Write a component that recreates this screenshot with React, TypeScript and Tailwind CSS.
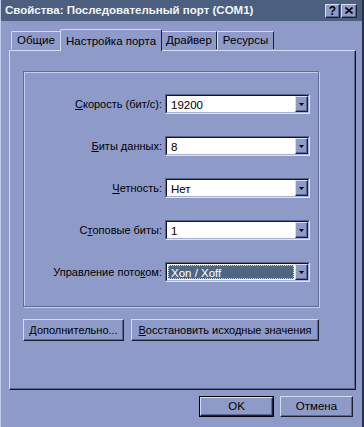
const face = "bg-[#8e9bc9]";

function U({ children }: { children: string }) {
  return <span className="underline underline-offset-[1px]">{children}</span>;
}

function Raised({ className, children }: { className?: string; children?: React.ReactNode }) {
  return (
    <div
      className={`${face} border border-t-[#d6dcf4] border-l-[#d6dcf4] border-r-[#1c2030] border-b-[#1c2030] shadow-[inset_-1px_-1px_0_#5c6690] flex items-center justify-center ${className ?? ""}`}
    >
      {children}
    </div>
  );
}

function Combo({ value, selected }: { value: string; selected?: boolean }) {
  return (
    <div className="w-[145px] h-[20px] flex border border-t-[#5a6488] border-l-[#5a6488] border-r-[#dfe4f7] border-b-[#dfe4f7]">
      <div className="flex-1 flex border border-t-[#151822] border-l-[#151822] border-r-[#a7b1d8] border-b-[#a7b1d8] bg-white">
        <div className="flex-1 p-[1px]">
          {selected ? (
            <div className="h-full bg-[#4f6683] text-white border border-dotted border-[#cfd6ea] pl-[2px] leading-[14px] text-[11.5px]">
              {value}
            </div>
          ) : (
            <div className="h-full pl-[3px] leading-[16px] text-black text-[11.5px]">{value}</div>
          )}
        </div>
        <Raised className="w-[13px] h-full">
          <svg width="5" height="3" viewBox="0 0 5 3">
            <path d="M0 0h5L2.5 3z" fill="#000" />
          </svg>
        </Raised>
      </div>
    </div>
  );
}

function Row({ label, value, selected }: { label: React.ReactNode; value: string; selected?: boolean }) {
  return (
    <div className="flex items-center">
      <div className="w-[141px] pr-[3px] text-right text-black">{label}</div>
      <Combo value={value} selected={selected} />
    </div>
  );
}

export default function App() {
  return (
    <div
      className={`w-[364px] h-[427px] ${face} relative overflow-hidden text-[11px] text-black border-l border-l-[#c3cbeb] border-r-2 border-r-[#2a3044]`}
      style={{ fontFamily: '"Liberation Sans", Arial, sans-serif' }}
    >
      {/* title bar */}
      <div className="h-[21px] bg-[#4c5f7e] flex items-center pl-[4px] pr-[5px]">
        <div className="flex-1 text-[#f2f4fb] font-bold text-[11.5px]">
          Свойства: Последовательный порт (COM1)
        </div>
        <Raised className="w-[15px] h-[14px] font-bold text-[12px] leading-none">?</Raised>
        <Raised className="w-[16px] h-[14px] ml-[1px]">
          <svg width="8" height="7" viewBox="0 0 8 7">
            <path d="M0.5 0.5L7.5 6.5M7.5 0.5L0.5 6.5" stroke="#000" strokeWidth="1.6" />
          </svg>
        </Raised>
      </div>

      {/* tabs */}
      <div className="ml-[8px] mt-[7px] flex items-end h-[22px] text-[11.5px] relative z-10">
        <div className="h-[18px] w-[49px] flex items-center justify-center border-t border-l border-t-[#d6dcf4] border-l-[#d6dcf4] rounded-tl-[2px] mb-[1px] ml-[2px]">
          Общие
        </div>
        <div className="h-[22px] w-[102px] flex items-start pt-[3px] justify-center border-t border-l border-r border-t-[#d6dcf4] border-l-[#d6dcf4] border-r-[#1c2030] rounded-t-[2px] -mb-[1px] bg-[#8e9bc9]">
          Настройка порта
        </div>
        <div className="h-[18px] w-[55px] flex items-center justify-center border-t border-r border-t-[#d6dcf4] border-r-[#1c2030] mb-[1px]">
          Драйвер
        </div>
        <div className="h-[18px] w-[57px] flex items-center justify-center border-t border-l border-r border-t-[#d6dcf4] border-l-[#d6dcf4] border-r-[#1c2030] mb-[1px]">
          Ресурсы
        </div>
      </div>

      {/* tab panel */}
      <div className="ml-[8px] w-[347px] h-[340px] border border-t-[#d6dcf4] border-l-[#d6dcf4] border-r-[#151822] border-b-[#151822] shadow-[inset_-1px_-1px_0_#5c6690] pt-[20px] pl-[13px]">
        <div className="w-[296px] h-[236px] border border-[#5f6a95] shadow-[inset_1px_1px_0_#c6cdeb,1px_1px_0_#c6cdeb] pt-[22px] flex flex-col gap-[22px]">
          <Row label={<><U>С</U>корость (бит/с):</>} value="19200" />
          <Row label={<><U>Б</U>иты данных:</>} value="8" />
          <Row label={<><U>Ч</U>етность:</>} value="Нет" />
          <Row label={<>С<U>т</U>оповые биты:</>} value="1" />
          <Row label={<>Управление пото<U>к</U>ом:</>} value="Xon / Xoff" selected />
        </div>
        <div className="flex gap-[7px] mt-[12px]">
          <Raised className="w-[101px] h-[22px]">
            <span><U>Д</U>ополнительно...</span>
          </Raised>
          <Raised className="w-[188px] h-[22px]">
            <span><U>В</U>осстановить исходные значения</span>
          </Raised>
        </div>
      </div>

      {/* bottom buttons */}
      <div className="flex justify-end gap-[6px] mt-[6px] pr-[9px]">
        <div className="w-[75px] h-[21px] border border-black">
          <Raised className="w-full h-full text-[11.5px]">OK</Raised>
        </div>
        <Raised className="w-[73px] h-[21px] text-[11.5px]">Отмена</Raised>
      </div>
    </div>
  );
}
